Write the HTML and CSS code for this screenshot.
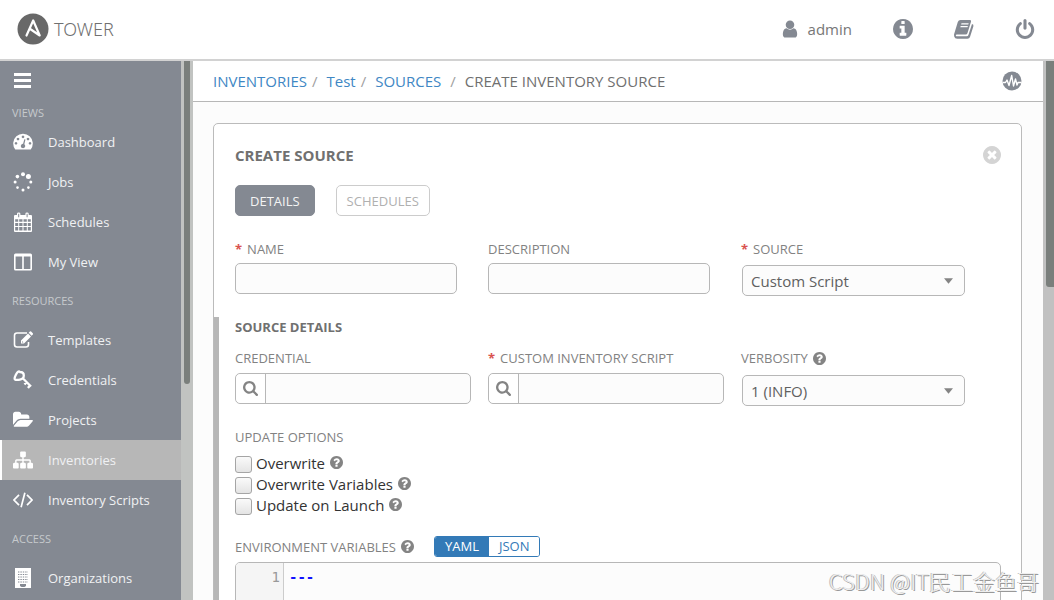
FILE: index.html
```html
<!DOCTYPE html>
<html lang="en">
<head>
<meta charset="utf-8">
<title>Tower - Create Inventory Source</title>
<link rel="stylesheet" href="styles.css">
</head>
<body>
<svg class="sprite" aria-hidden="true">
  <symbol id="i-user" viewBox="0 0 1792 1792"><path d="M1536 1399q0 109-62.5 187t-150.5 78h-854q-88 0-150.5-78t-62.5-187q0-85 8.5-160.5t31.5-152 58.5-131 94-89 134.5-34.5q131 128 313 128t313-128q76 0 134.5 34.5t94 89 58.5 131 31.5 152 8.5 160.5zm-256-887q0 159-112.5 271.5t-271.5 112.5-271.5-112.5-112.5-271.5 112.5-271.5 271.5-112.5 271.5 112.5 112.5 271.5z"/></symbol>
  <symbol id="i-help" viewBox="128 128 1536 1536"><path d="M1024 1376v-192q0-14-9-23t-23-9h-192q-14 0-23 9t-9 23v192q0 14 9 23t23 9h192q14 0 23-9t9-23zm256-672q0-88-55.5-163t-138.5-116-170-41q-243 0-371 213-15 24 8 42l132 100q7 6 19 6 16 0 25-12 53-68 86-92 34-24 86-24 48 0 85.5 26t37.5 59q0 38-20 61t-68 45q-63 28-115.5 86.5t-52.5 125.5v36q0 14 9 23t23 9h192q14 0 23-9t9-23q0-19 21.5-49.5t54.5-49.5q32-18 49-28.5t46-35 44.5-48 28-60.5 12.5-81zm384 192q0 209-103 385.5t-279.5 279.5-385.5 103-385.5-103-279.5-279.5-103-385.5 103-385.5 279.5-279.5 385.5-103 385.5 103 279.5 279.5 103 385.5z"/></symbol>
  <symbol id="i-info" viewBox="128 128 1536 1536"><path d="M1152 1376v-160q0-14-9-23t-23-9h-96v-512q0-14-9-23t-23-9h-320q-14 0-23 9t-9 23v160q0 14 9 23t23 9h96v320h-96q-14 0-23 9t-9 23v160q0 14 9 23t23 9h448q14 0 23-9t9-23zm-128-896v-160q0-14-9-23t-23-9h-192q-14 0-23 9t-9 23v160q0 14 9 23t23 9h192q14 0 23-9t9-23zm640 416q0 209-103 385.5t-279.5 279.5-385.5 103-385.5-103-279.5-279.5-103-385.5 103-385.5 279.5-279.5 385.5-103 385.5 103 279.5 279.5 103 385.5z"/></symbol>
  <symbol id="i-close" viewBox="128 128 1536 1536"><path d="M1277 1122q0-26-19-45l-181-181 181-181q19-19 19-45 0-27-19-46l-90-90q-19-19-46-19-26 0-45 19l-181 181-181-181q-19-19-45-19-27 0-46 19l-90 90q-19 19-19 46 0 26 19 45l181 181-181 181q-19 19-19 45 0 27 19 46l90 90q19 19 46 19 26 0 45-19l181-181 181 181q19 19 45 19 27 0 46-19l90-90q19-19 19-46zm387-226q0 209-103 385.5t-279.5 279.5-385.5 103-385.5-103-279.5-279.5-103-385.5 103-385.5 279.5-279.5 385.5-103 385.5 103 279.5 279.5 103 385.5z"/></symbol>
  <symbol id="i-power" viewBox="128 0 1536 1664"><path d="M1664 896q0 156-61 298t-164 245-245 164-298 61-298-61-245-164-164-245-61-298q0-182 80.5-343t226.5-270q43-32 95.5-25t83.5 50q32 42 24.5 94.5t-49.5 84.5q-98 74-151.5 181t-53.5 228q0 104 40.5 198.5t109.5 163.5 163.5 109.5 198.5 40.5 198.5-40.5 163.5-109.5 109.5-163.5 40.5-198.5q0-121-53.5-228t-151.5-181q-42-32-49.5-84.5t24.5-94.5q31-43 84-50t95 25q146 109 226.5 270t80.5 343zm-640-768v640q0 52-38 90t-90 38-90-38-38-90v-640q0-52 38-90t90-38 90 38 38 90z"/></symbol>
  <symbol id="i-search" viewBox="64 128 1664 1664"><path d="M1216 832q0-185-131.5-316.5t-316.5-131.5-316.5 131.5-131.5 316.5 131.5 316.5 316.5 131.5 316.5-131.5 131.5-316.5zm512 832q0 52-38 90t-90 38q-54 0-90-38l-343-342q-179 124-399 124-143 0-273.5-55.5t-225-150-150-225-55.5-273.5 55.5-273.5 150-225 225-150 273.5-55.5 273.5 55.5 225 150 150 225 55.5 273.5q0 220-124 399l343 343q37 37 37 90z"/></symbol>
  <symbol id="i-sitemap" viewBox="0 0 1792 1792"><path d="M1792 1248v320q0 40-28 68t-68 28h-320q-40 0-68-28t-28-68v-320q0-40 28-68t68-28h96v-192h-512v192h96q40 0 68 28t28 68v320q0 40-28 68t-68 28h-320q-40 0-68-28t-28-68v-320q0-40 28-68t68-28h96v-192h-512v192h96q40 0 68 28t28 68v320q0 40-28 68t-68 28h-320q-40 0-68-28t-28-68v-320q0-40 28-68t68-28h96v-192q0-52 38-90t90-38h512v-192h-96q-40 0-68-28t-28-68v-320q0-40 28-68t68-28h320q40 0 68 28t28 68v320q0 40-28 68t-68 28h-96v192h512q52 0 90 38t38 90v192h96q40 0 68 28t28 68z"/></symbol>
  <symbol id="i-folder" viewBox="0 0 1879 1792"><path d="M1879 952q0 31-31 66l-336 396q-43 51-120.5 86.5t-143.5 35.5h-1088q-34 0-60.5-13t-26.5-43q0-31 31-66l336-396q43-51 120.5-86.5t143.5-35.5h1088q34 0 60.5 13t26.5 43zm-343-344v160h-832q-94 0-197 47.5t-164 119.5l-337 396-5 6q0-4-.5-12.5t-.5-12.5v-960q0-92 66-158t158-66h320q92 0 158 66t66 158v32h544q92 0 158 66t66 158z"/></symbol>
  <symbol id="i-dash" viewBox="0 0 20 20"><path fill-rule="evenodd" d="M2.3 17.5A9.8 9.8 0 1 1 17.7 17.5zM3 10a1.3 1.3 0 1 0 .01 0zM5 5.7a1.3 1.3 0 1 0 .01 0zM10 3.6a1.3 1.3 0 1 0 .01 0zM15 5.7a1.3 1.3 0 1 0 .01 0zM17 10a1.3 1.3 0 1 0 .01 0zM11.3 7.2l-1.2 4.6a2.2 2.2 0 1 0 1.2.4l1.2-4.7z"/></symbol>
  <symbol id="i-jobs" viewBox="0 0 20 20"><circle cx="10" cy="2.3" r="2"/><circle cx="15.4" cy="4.6" r="2.5"/><circle cx="4.4" cy="4.6" r="1.8"/><circle cx="2.1" cy="10.1" r="1.5"/><circle cx="17.8" cy="10.1" r="1.5"/><circle cx="4.5" cy="15.6" r="1.3"/><circle cx="10" cy="18" r="1.5"/><circle cx="15.4" cy="15.6" r="1.3"/></symbol>
  <symbol id="i-cal" viewBox="0 0 20 20"><path fill-rule="evenodd" d="M2 3h2V1.800Q4 .5 5.700 .5T7.400 1.800V3h5V1.800Q12.400 .5 14 .5T15.700 1.800V3H18q1 0 1 1v15q0 1-1 1H2q-1 0-1-1V4q0-1 1-1zM5.200 1.800v3.400h1V1.800zM13.600 1.800v3.400h1V1.800zM2.200 7.300v2.500h3V7.300zm4 0v2.500h3.300V7.300zm4.300 0v2.500h3.300V7.300zm4.300 0v2.500h3V7.300zM2.200 10.900v3h3v-3zm4 0v3h3.300v-3zm4.300 0v3h3.300v-3zm4.300 0v3h3v-3zM2.200 15v3.500h3V15zm4 0v3.500h3.300V15zm4.300 0v3.500h3.300V15zm4.300 0v3.500h3V15z"/></symbol>
  <symbol id="i-columns" viewBox="0 0 20 20"><path fill-rule="evenodd" d="M2.500 1.500h15Q19 1.500 19 3v14q0 1.500-1.500 1.500h-15Q1 18.500 1 17V3q0-1.500 1.500-1.500zM2.600 4.600V17h6.600V4.600zm8.200 0V17h6.600V4.600z"/></symbol>
  <symbol id="i-edit" viewBox="0 0 20 20"><path fill="none" stroke="currentColor" stroke-width="1.600" d="M14 3H4Q1.500 3 1.500 5.500v9Q1.500 17 4 17h9q2.500 0 2.500-2.500V12"/><path fill-rule="evenodd" d="M8 10.500L15 3.500l3 3-7 7H8zM9 11v1.500h1.500zM15.700 2.800l1.200-1.200q.6-.5 1.200 0l1.700 1.700q.6.600 0 1.200l-1.200 1.200z"/></symbol>
  <symbol id="i-key" viewBox="0 0 20 20"><path fill="none" stroke="currentColor" stroke-width="2.300" d="M7 2Q10.800 2 10.800 5.500T7 9.600 2 9.500 3 4.500 7 2zM9.800 8.300L18 16.500M13.200 12.500L11.500 14.500M16.800 15.500L15 18"/></symbol>
  <symbol id="i-code" viewBox="0 0 20 20"><path fill="none" stroke="currentColor" stroke-width="1.700" d="M6 4.800L1 10l5 5.200M14 4.800L19 10l-5 5.200M11.900 2.800L8.100 17.200"/></symbol>
  <symbol id="i-building" viewBox="0 0 20 20"><path fill-rule="evenodd" d="M2 0h16v20H2zM7 16v2l1.500 1h3l1.500-1v-2z"/><path fill="none" stroke="#848992" stroke-width="1.200" stroke-dasharray="1.400 1" d="M5 4h10M5 6.500h10M5 9h10M5 11.500h10M5 14h10"/></symbol>
  <symbol id="i-book" viewBox="0 0 20 20"><path fill-rule="evenodd" d="M6.500 1H16q1.500 0 1 1.700L13.500 14q-.4 1.500-2 1.500H3q-1.300 0-1.200.9.200.9 1.400.9h9.600q1.200 0 1.600-1.200L18 5q1.900.6 1.400 2.200L16 18q-.6 1.800-2.500 1.800H3.200Q.8 19.800.2 17.500L0 15.500 3.800 3Q4.500 1 6.500 1zM7.500 4.300L7.100 5.500h7.200l.4-1.200zM6.700 7L6.300 8.200h7.200l.4-1.200z"/></symbol>
  <symbol id="i-activity" viewBox="0 0 20 20"><circle cx="10" cy="10" r="9.500"/><path fill="none" stroke="#fff" stroke-width="1.400" stroke-linejoin="round" d="M1 11.500h2.500L5 9l2 5.500 2.700-10 1.800 10.500L13.500 8l1.500 6 1-2.500h3.500"/></symbol>
  <symbol id="i-caret" viewBox="0 0 8 5"><path d="M0 0h8L4 5z"/></symbol>
</svg>

<div class="app">
  <header class="topbar">
    <a class="brand" href="#">
      <svg class="brand-mark" viewBox="0 0 32 32" aria-hidden="true"><circle cx="16" cy="16" r="15.500" fill="#686868"/><path fill="none" stroke="#fff" stroke-width="2.200" stroke-linejoin="round" stroke-linecap="round" d="M9.500 22.500L16.200 7.500 22.700 22.500 12.500 15.500"/></svg>
      <span>TOWER</span>
    </a>
    <nav class="topnav" aria-label="Account">
      <a class="account" href="#"><svg class="icon icon-user"><use href="#i-user"/></svg>admin</a>
      <a href="#" aria-label="About"><svg class="icon"><use href="#i-info"/></svg></a>
      <a href="#" aria-label="Documentation"><svg class="icon"><use href="#i-book"/></svg></a>
      <a href="#" aria-label="Log out"><svg class="icon"><use href="#i-power"/></svg></a>
    </nav>
  </header>

  <div class="body">
    <nav class="sidebar" aria-label="Main">
      <button class="menu-toggle" type="button" aria-label="Toggle menu"><i></i><i></i><i></i></button>
      <h2 class="side-title side-title-first">VIEWS</h2>
      <a href="#"><svg class="icon"><use href="#i-dash"/></svg>Dashboard</a>
      <a href="#"><svg class="icon"><use href="#i-jobs"/></svg>Jobs</a>
      <a href="#"><svg class="icon"><use href="#i-cal"/></svg>Schedules</a>
      <a href="#"><svg class="icon"><use href="#i-columns"/></svg>My View</a>
      <h2 class="side-title">RESOURCES</h2>
      <a href="#"><svg class="icon"><use href="#i-edit"/></svg>Templates</a>
      <a href="#"><svg class="icon"><use href="#i-key"/></svg>Credentials</a>
      <a href="#"><svg class="icon"><use href="#i-folder"/></svg>Projects</a>
      <a href="#" class="active" aria-current="page"><svg class="icon"><use href="#i-sitemap"/></svg>Inventories</a>
      <a href="#"><svg class="icon"><use href="#i-code"/></svg>Inventory Scripts</a>
      <h2 class="side-title">ACCESS</h2>
      <a href="#"><svg class="icon"><use href="#i-building"/></svg>Organizations</a>
    </nav>
    <div class="track track-side" aria-hidden="true"><div class="thumb"></div></div>

    <main class="main">
      <div class="crumbs">
        <nav aria-label="Breadcrumb">
          <ol>
            <li><a href="#">INVENTORIES</a></li>
            <li><a href="#">Test</a></li>
            <li><a href="#">SOURCES</a></li>
            <li class="current">CREATE INVENTORY SOURCE</li>
          </ol>
        </nav>
        <button class="icon-button" type="button" aria-label="Activity stream"><svg class="icon"><use href="#i-activity"/></svg></button>
      </div>

      <form class="card">
        <div class="card-head">
          <h1>CREATE SOURCE</h1>
          <button class="icon-button close" type="button" aria-label="Close"><svg class="icon"><use href="#i-close"/></svg></button>
        </div>
        <div class="tabs">
          <button class="tab tab-active" type="button">DETAILS</button>
          <button class="tab" type="button">SCHEDULES</button>
        </div>

        <div class="fields">
          <div class="field">
            <label for="name"><b class="req">*</b>NAME</label>
            <input class="control" id="name" type="text">
          </div>
          <div class="field">
            <label for="description">DESCRIPTION</label>
            <input class="control" id="description" type="text">
          </div>
          <div class="field">
            <label for="source"><b class="req">*</b>SOURCE</label>
            <div class="select"><select class="control" id="source"><option>Custom Script</option></select><svg class="caret"><use href="#i-caret"/></svg></div>
          </div>
        </div>

        <section class="details">
          <h2>SOURCE DETAILS</h2>
          <div class="fields">
            <div class="field">
              <label for="credential">CREDENTIAL</label>
              <div class="lookup"><button type="button" aria-label="Find credential"><svg><use href="#i-search"/></svg></button><input id="credential" type="text"></div>
            </div>
            <div class="field">
              <label for="script"><b class="req">*</b>CUSTOM INVENTORY SCRIPT</label>
              <div class="lookup"><button type="button" aria-label="Find script"><svg><use href="#i-search"/></svg></button><input id="script" type="text"></div>
            </div>
            <div class="field">
              <label for="verbosity">VERBOSITY<svg class="help"><use href="#i-help"/></svg></label>
              <div class="select"><select class="control" id="verbosity"><option>1 (INFO)</option></select><svg class="caret"><use href="#i-caret"/></svg></div>
            </div>
          </div>

          <fieldset class="options">
            <legend>UPDATE OPTIONS</legend>
            <label><input type="checkbox">Overwrite<svg class="help"><use href="#i-help"/></svg></label>
            <label><input type="checkbox">Overwrite Variables<svg class="help"><use href="#i-help"/></svg></label>
            <label><input type="checkbox">Update on Launch<svg class="help"><use href="#i-help"/></svg></label>
          </fieldset>

          <div class="vars-head">
            <label for="variables">ENVIRONMENT VARIABLES<svg class="help"><use href="#i-help"/></svg></label>
            <div class="toggle"><button class="on" type="button">YAML</button><button type="button">JSON</button></div>
          </div>
          <div class="editor">
            <div class="gutter">1</div>
            <textarea id="variables" rows="6" spellcheck="false">---</textarea>
          </div>
        </section>
      </form>
    </main>
    <div class="track track-main" aria-hidden="true"><div class="thumb"></div></div>
  </div>
  <div class="watermark">CSDN @IT民工金鱼哥</div>
</div>
</body>
</html>
```
FILE: styles.css
```css
* { box-sizing: border-box; }

body {
  margin: 0;
  font-family: "Open Sans", sans-serif;
  font-size: 15px;
  color: #707070;
  background: #fff;
}

a { color: inherit; text-decoration: none; }
button, input, select, textarea { font: inherit; color: inherit; }
button { cursor: pointer; }
h1, h2 { margin: 0; }

.sprite { position: absolute; width: 0; height: 0; }
.icon { width: 20px; height: 20px; fill: currentColor; flex: none; }

.app {
  position: relative;
  display: flex;
  flex-direction: column;
  height: 100vh;
  overflow: hidden;
}

/* Top bar */
.topbar {
  display: flex;
  align-items: center;
  justify-content: space-between;
  flex: none;
  height: 61px;
  padding: 0 19px 2px 17px;
  border-bottom: 2px solid #d2d2d2;
}
.brand {
  display: flex;
  align-items: center;
  gap: 5px;
  font-family: "Noto Sans", sans-serif;
  font-weight: 300;
  font-size: 18px;
}
.brand-mark { width: 32px; height: 32px; }
.topnav { display: flex; align-items: center; gap: 41px; color: #848992; }
.topnav a { display: flex; align-items: center; }
.topnav .account { gap: 8px; color: #777; }
.icon-user { color: #848992; }

.body { display: flex; flex: 1; min-height: 0; }

/* Sidebar */
.sidebar {
  flex: none;
  width: 181px;
  overflow: hidden;
  background: #848992;
  color: #f0f1f3;
  font-size: 13px;
}
.menu-toggle {
  display: flex;
  flex-direction: column;
  gap: 3px;
  margin: 12px 0 0 14px;
  padding: 0;
  border: 0;
  background: none;
}
.menu-toggle i { width: 17px; height: 3px; background: #fff; }
.side-title {
  height: 38px;
  padding-left: 12px;
  font-size: 11px;
  font-weight: 400;
  line-height: 38px;
  color: #c6c9cd;
}
.side-title-first { height: 19px; margin-top: 15px; line-height: 20px; }
.sidebar a {
  display: flex;
  align-items: center;
  gap: 15px;
  height: 40px;
  padding-left: 11px;
  border-left: 2px solid transparent;
}
.sidebar .icon { color: #fff; }
.sidebar .active { background: #b7b7b7; border-left-color: #fff; }

/* Scroll tracks */
.track { flex: none; background: #c1c3c1; }
.track-side { width: 12px; padding: 0 3px; }
.track-main { width: 11px; padding-left: 3px; background: #c1c1c1; }
.thumb { background: #7a7f7c; }
.track-side .thumb { height: 60%; border-radius: 0 0 3px 3px; }
.track-main .thumb { height: 42%; border-radius: 0 0 0 3px; }

/* Main column */
.main { flex: 1; min-width: 0; overflow: hidden; background: #fcfcfc; }
.crumbs {
  display: flex;
  align-items: center;
  justify-content: space-between;
  height: 41px;
  padding: 0 21px 0 20px;
  border-bottom: 1px solid #b7b7b7;
  background: #fff;
}
.crumbs ol { display: flex; margin: 0; padding: 0; list-style: none; }
.crumbs a { color: #4087c4; }
.crumbs li + li::before { content: "/"; margin: 0 9px 0 5px; color: #a0a0a0; }
.crumbs .current::before { margin-left: 9px; }
.icon-button {
  display: flex;
  padding: 0;
  border: 0;
  background: none;
  color: #848992;
}

.card {
  margin: 21px 21px 0 20px;
  border: 1px solid #bbb;
  border-radius: 5px;
  background: #fff;
}
.card-head {
  display: flex;
  align-items: center;
  justify-content: space-between;
  padding: 21px 20px 0 21px;
}
.card h1, .card h2 { font-weight: 700; }
.card h1 { font-size: 15px; line-height: 20px; }
.close { color: #d4d4d4; }
.close .icon { width: 18px; height: 18px; }

.tabs { display: flex; gap: 21px; padding: 20px 21px 0; }
.tab {
  height: 31px;
  padding: 0 10px;
  border: 1px solid #ccc;
  border-radius: 5px;
  background: #fff;
  color: #b0b0b0;
  font-size: 13px;
}
.tab-active { padding: 0 14px; border-color: #848992; background: #848992; color: #f4f4f4; }

.fields {
  display: grid;
  grid-template-columns: repeat(3, minmax(0, 1fr));
  gap: 17px;
  padding: 23px 44px 0 21px;
}
.field > label, .vars-head label, .options legend {
  display: flex;
  align-items: center;
  font-size: 13px;
  line-height: 20px;
  color: #828282;
}
.req { margin-right: 5px; color: #d9534f; }
.control {
  display: block;
  height: 31px;
  margin: 4px 0 0;
  padding: 0 8px;
  border: 1px solid #b7b7b7;
  border-radius: 5px;
  background: #fcfcfc;
}
input.control { width: calc(100% - 14px); }
.select { position: relative; margin: 6px 12px 0 1px; }
.select .control {
  width: 100%;
  margin: 0;
  appearance: none;
  color: #606060;
}
.caret {
  position: absolute;
  top: 13px;
  right: 12px;
  width: 9px;
  height: 6px;
  fill: #848484;
  pointer-events: none;
}
.help { width: 13px; height: 13px; margin-left: 5px; fill: #848484; }

.details { margin-top: 21px; border-left: 5px solid #b7b7b7; }
.details h2 { padding-left: 16px; font-size: 13px; line-height: 20px; }
.details .fields { padding: 11px 44px 0 16px; }
.details .select { margin-top: 7px; }
.lookup {
  display: flex;
  height: 31px;
  margin-top: 5px;
  border: 1px solid #b7b7b7;
  border-radius: 5px;
  background: #fcfcfc;
}
.lookup button {
  width: 30px;
  padding: 0 7px;
  border: 0;
  border-right: 1px solid #b7b7b7;
  border-radius: 5px 0 0 5px;
  background: #fff;
}
.lookup svg { display: block; width: 15px; height: 15px; fill: #848484; }
.lookup input { flex: 1; min-width: 0; border: 0; background: none; }

.options { margin: 0; padding: 21px 16px 0; border: 0; }
.options legend { float: left; width: 100%; padding: 0; margin-bottom: 5px; }
.options label {
  display: flex;
  align-items: center;
  clear: both;
  height: 21px;
  color: #333;
}
.options input {
  appearance: none;
  width: 17px;
  height: 17px;
  margin: 3px 4px 0 0;
  border: 1px solid #a5a5a5;
  border-radius: 3px;
  background: linear-gradient(#fafafa, #e4e4e4);
}

.vars-head { display: flex; align-items: center; gap: 20px; padding: 21px 16px 0; }
.toggle { display: flex; border: 1px solid #337ab7; border-radius: 3px; overflow: hidden; }
.toggle button {
  height: 19px;
  padding: 0 10px;
  border: 0;
  background: #fff;
  color: #337ab7;
  font-size: 13px;
  line-height: 19px;
}
.toggle .on { background: #337ab7; color: #fff; }
.editor {
  display: flex;
  margin: 5px 20px 20px 16px;
  border: 1px solid #b7b7b7;
  border-radius: 5px;
  background: #fcfcfc;
  overflow: hidden;
  font-family: "DejaVu Sans Mono", monospace;
  font-size: 14px;
  line-height: 20px;
}
.gutter {
  width: 48px;
  padding: 4px 3px;
  border-right: 1px solid #ccc;
  background: #f5f5f5;
  color: #999;
  text-align: right;
}
.editor textarea {
  flex: 1;
  padding: 4px 5px;
  border: 0;
  background: none;
  color: #11f;
  font-weight: 700;
  resize: none;
}

.watermark {
  position: absolute;
  right: 15px;
  bottom: 4px;
  font: 300 22px/32px "Noto Sans CJK SC", sans-serif;
  color: #eee;
  text-shadow: 1px 1px 0 #999, -1px 0 0 #bbb;
  pointer-events: none;
}
```
